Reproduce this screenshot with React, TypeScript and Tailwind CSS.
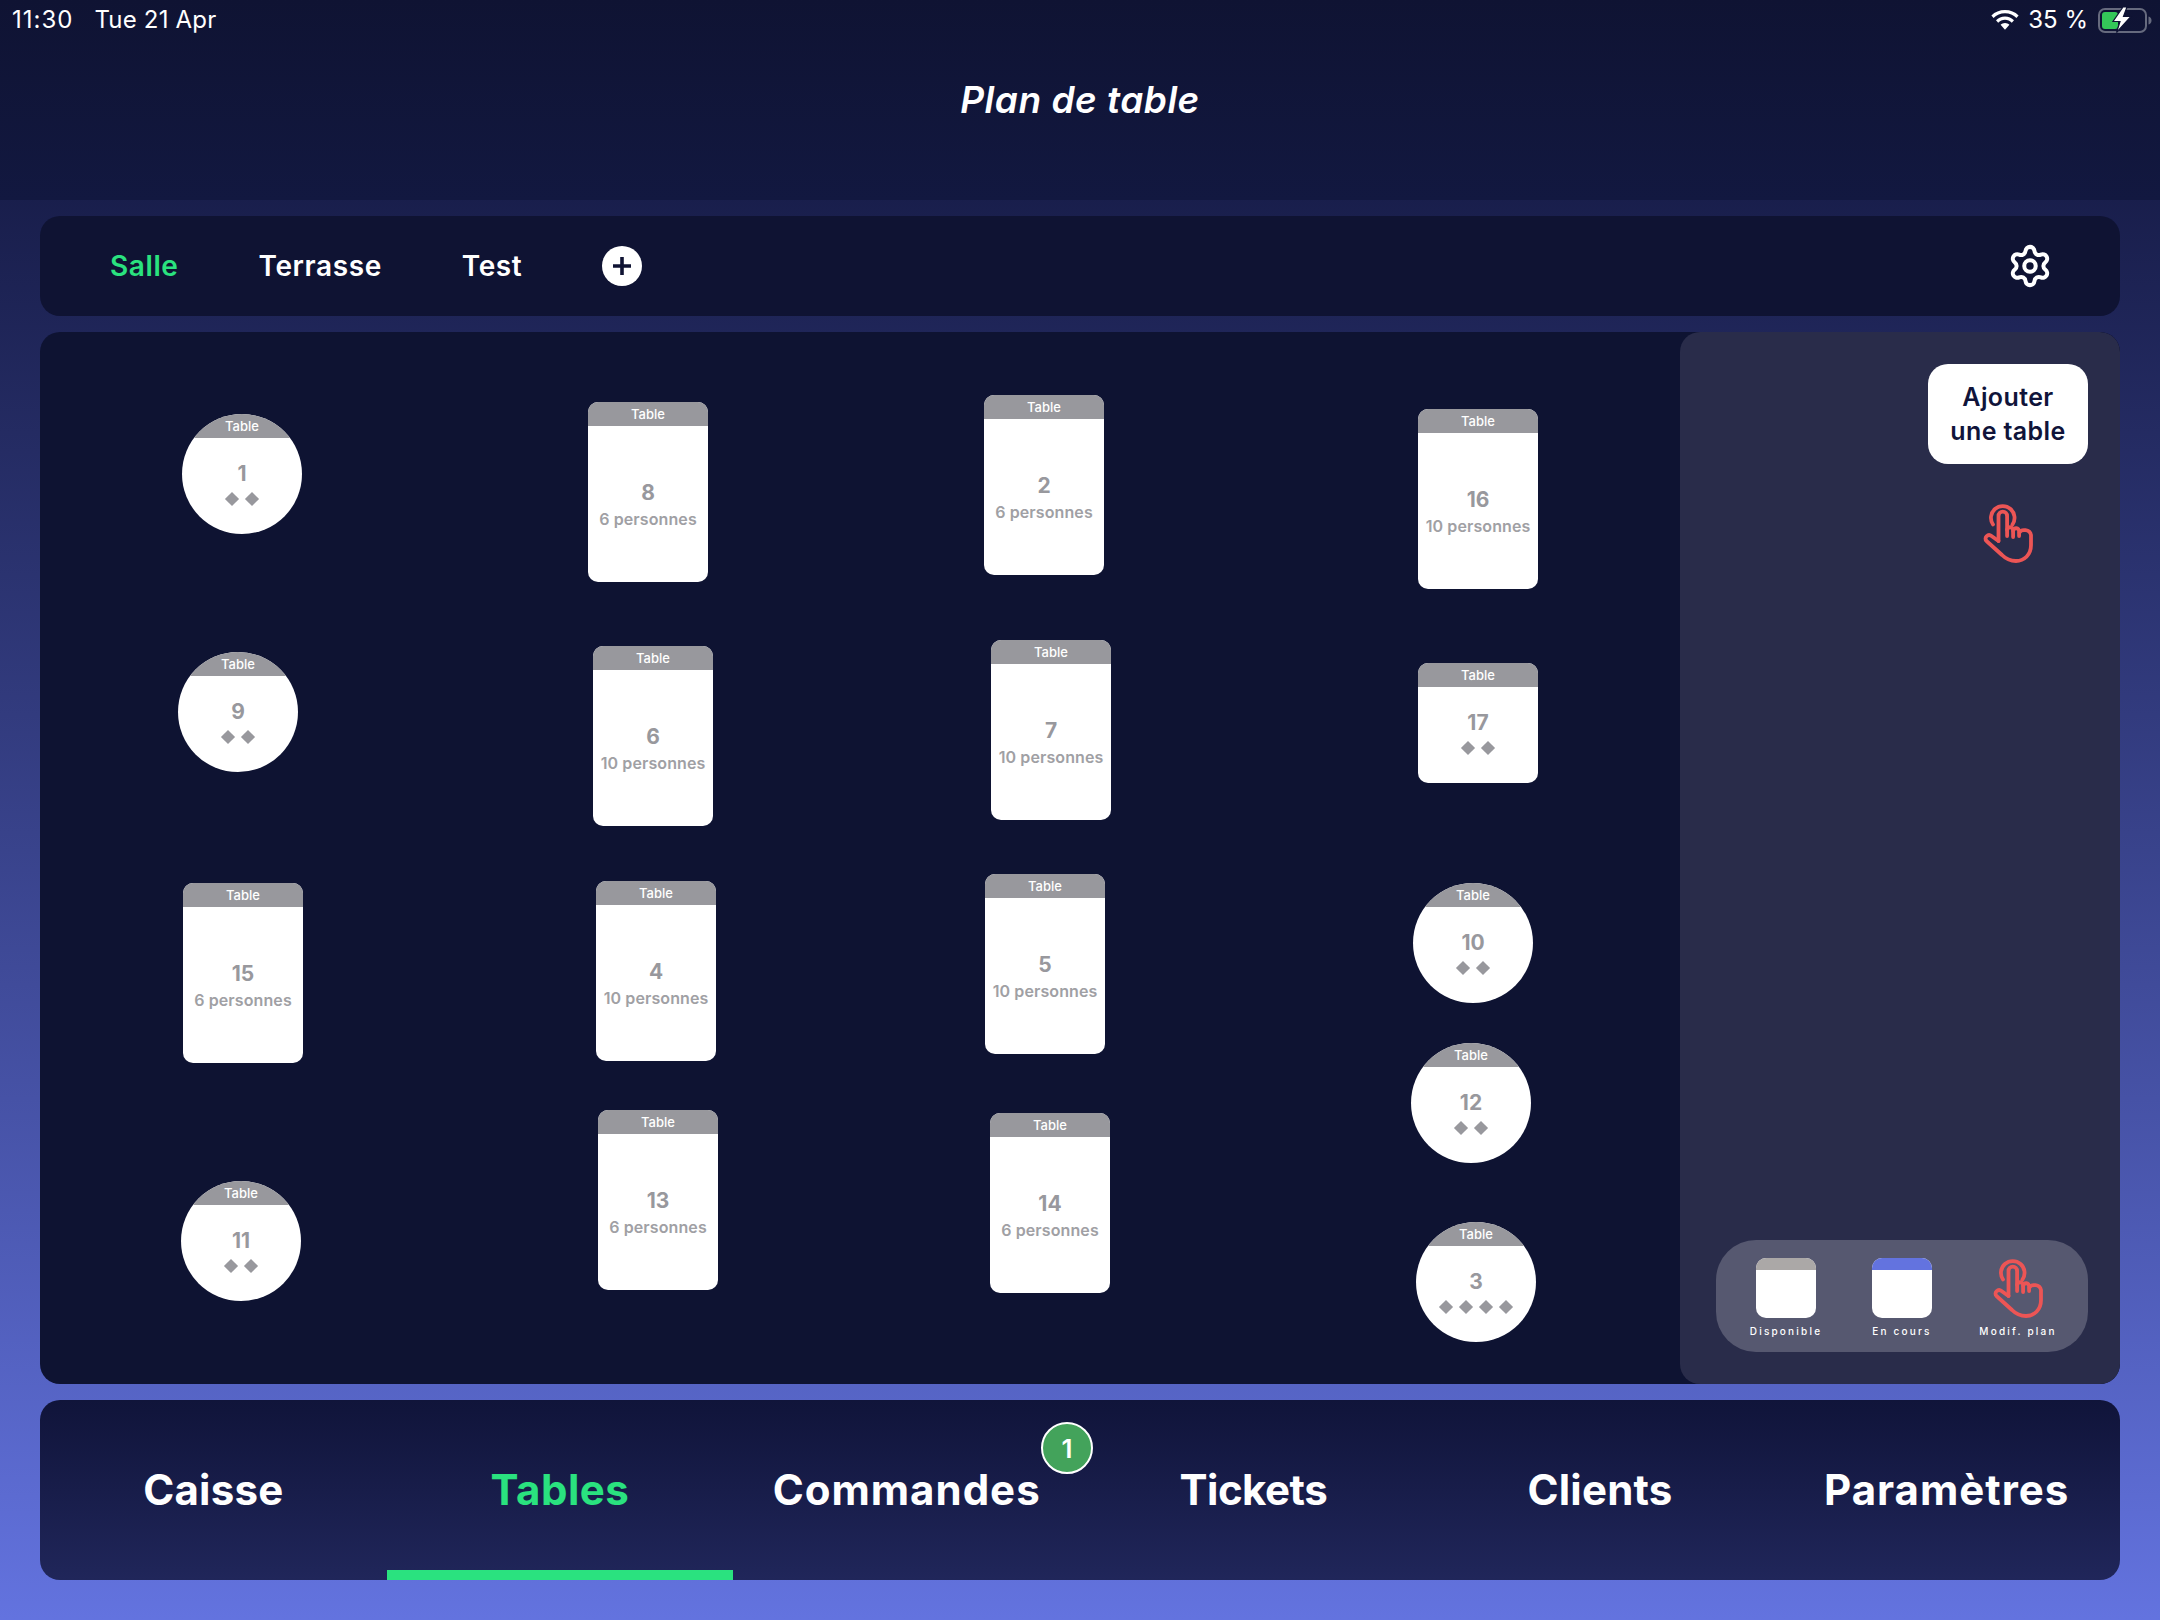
import React from 'react';
import { Settings } from 'lucide-react';

type TableItem = {
  id: number;
  x: number;
  y: number;
  shape: 'rect' | 'round' | 'square';
  seats: number;
};

// positions are relative to the floor panel (page x - 40, page y - 332)
const tables: TableItem[] = [
  { id: 1, x: 142, y: 82, shape: 'round', seats: 2 },
  { id: 8, x: 548, y: 70, shape: 'rect', seats: 6 },
  { id: 2, x: 944, y: 63, shape: 'rect', seats: 6 },
  { id: 16, x: 1378, y: 77, shape: 'rect', seats: 10 },
  { id: 9, x: 138, y: 320, shape: 'round', seats: 2 },
  { id: 6, x: 553, y: 314, shape: 'rect', seats: 10 },
  { id: 7, x: 951, y: 308, shape: 'rect', seats: 10 },
  { id: 17, x: 1378, y: 331, shape: 'square', seats: 2 },
  { id: 15, x: 143, y: 551, shape: 'rect', seats: 6 },
  { id: 4, x: 556, y: 549, shape: 'rect', seats: 10 },
  { id: 5, x: 945, y: 542, shape: 'rect', seats: 10 },
  { id: 10, x: 1373, y: 551, shape: 'round', seats: 2 },
  { id: 12, x: 1371, y: 711, shape: 'round', seats: 2 },
  { id: 11, x: 141, y: 849, shape: 'round', seats: 2 },
  { id: 13, x: 558, y: 778, shape: 'rect', seats: 6 },
  { id: 14, x: 950, y: 781, shape: 'rect', seats: 6 },
  { id: 3, x: 1376, y: 890, shape: 'round', seats: 4 },
];

const tabs = [
  { label: 'Caisse', spacing: 'tracking-[0.2px]' },
  { label: 'Tables', spacing: 'tracking-[0.5px]' },
  { label: 'Commandes', spacing: 'tracking-[1px]' },
  { label: 'Tickets', spacing: 'tracking-[-0.5px]' },
  { label: 'Clients', spacing: 'tracking-[0.2px]' },
  { label: 'Paramètres', spacing: 'tracking-[1px]' },
];

const TapIcon: React.FC<{ className?: string }> = ({ className }) => (
  <svg viewBox="0 0 50 60" className={className} fill="none" stroke="#ec5555" strokeWidth="3.8" strokeLinecap="round" strokeLinejoin="round">
    <path d="M10 21.500 A11.800 11.800 0 1 1 29.500 21.500" />
    <path d="M15.500 38 V13 a4.300 4.300 0 0 1 8.600 0 V33" />
    <path d="M24.100 27 a3 3 0 0 1 6 0.500 V34" />
    <path d="M30.100 28 a3 3 0 0 1 6 0.500 V33" />
    <path d="M36.500 29.500 C38 26 47 26 48 32 V42 C48 52 41 58 33 58 C27 58 23 56 19 52 L3.500 38 C0.500 35 5 30 8.500 33 L15.500 38" />
  </svg>
);

const Diamonds: React.FC<{ count: number }> = ({ count }) => (
  <div className="mt-[6px] flex justify-center gap-[10px]">
    {Array.from({ length: count }).map((_, i) => (
      <span key={i} className="h-[10px] w-[10px] rotate-45 bg-[#98989d]" />
    ))}
  </div>
);

const FloorTable: React.FC<{ table: TableItem }> = ({ table }) => {
  const isRect = table.shape === 'rect';
  const outer = table.shape === 'round' ? 'h-[120px] rounded-full' : isRect ? 'h-[180px] rounded-[10px]' : 'h-[120px] rounded-[10px]';
  return (
    <div className={`absolute flex w-[120px] flex-col overflow-hidden bg-white ${outer}`} style={{ left: table.x, top: table.y }}>
      <div className="flex h-[24px] shrink-0 items-center justify-center bg-[#98989d] pt-[1px] text-[13px] font-medium text-white">Table</div>
      {isRect ? (
        <div className="flex flex-1 flex-col items-center justify-center pt-[3px]">
          <span className="text-[21px] leading-[26px] font-bold text-[#98989d]">{table.id}</span>
          <span className="text-[16px] leading-[26px] font-semibold tracking-[0.1px] whitespace-nowrap text-[#a0a0a4]">{table.seats} personnes</span>
        </div>
      ) : (
        <div className="flex flex-col items-center pt-[22px]">
          <span className="text-[21px] leading-[28px] font-bold text-[#98989d]">{table.id}</span>
          <Diamonds count={table.seats} />
        </div>
      )}
    </div>
  );
};

const LegendSwatch: React.FC<{ color: string; label: string }> = ({ color, label }) => (
  <div className="flex flex-col items-center">
    <div className="flex h-[60px] w-[60px] flex-col overflow-hidden rounded-[10px] bg-white">
      <div className={`h-[12px] ${color}`} />
    </div>
    <span className="mt-[6px] text-[10px] leading-[14px] font-medium tracking-[2.2px] whitespace-nowrap text-white">{label}</span>
  </div>
);

const StatusBar: React.FC = () => (
  <div className="flex h-[40px] items-center justify-between pr-[7px] pl-[12px] text-[24px] text-white">
    <div className="flex gap-[21px]">
      <span className="tracking-[1px]">11:30</span>
      <span className="tracking-[0.2px]">Tue 21 Apr</span>
    </div>
    <div className="flex items-center">
      <svg viewBox="0 0 28 20" className="h-[20px] w-[28px]" fill="white">
        <path d="M14 0 C8.600 0 3.900 2 0.400 5.400 L2.600 7.900 C5.500 5 9.500 3.300 14 3.300 C18.500 3.300 22.500 5 25.400 7.900 L27.600 5.400 C24.100 2 19.400 0 14 0 Z" />
        <path d="M14 6.500 C10.500 6.500 7.300 7.900 5 10.200 L7.200 12.700 C9 11 11.400 9.800 14 9.800 C16.600 9.800 19 11 20.800 12.700 L23 10.200 C20.700 7.900 17.500 6.500 14 6.500 Z" />
        <path d="M14 13 C12.300 13 10.800 13.700 9.600 14.800 L14 19.800 L18.400 14.800 C17.200 13.700 15.700 13 14 13 Z" />
      </svg>
      <span className="ml-[9px]">35 %</span>
      <svg viewBox="0 0 57 28" className="ml-[8px] h-[28px] w-[57px]" fill="none">
        <rect x="3" y="3" width="47" height="23" rx="6" stroke="#666a7e" strokeWidth="2" />
        <rect x="6" y="6" width="16" height="17" rx="3" fill="#34c759" />
        <path d="M52.500 10.500 c2 0.500 3 2 3 4 s-1 3.500 -3 4 Z" fill="#666a7e" />
        <path d="M27 1 L17 15.500 H24 L20.500 26.500 L35 10.500 H27.500 L31 1 Z" fill="white" stroke="#0f1333" strokeWidth="1.2" />
      </svg>
    </div>
  </div>
);

const App: React.FC = () => {
  return (
    <div className="flex h-[1620px] w-[2160px] flex-col overflow-hidden bg-gradient-to-b from-[#10143a] to-[#6373df] font-[Inter,sans-serif]">
      <header className="flex h-[200px] shrink-0 flex-col bg-gradient-to-b from-[#0f1333] to-[#121840]">
        <StatusBar />
        <div className="flex h-[120px] items-center justify-center text-[37px] font-semibold tracking-[0.5px] text-white italic">Plan de table</div>
      </header>

      <div className="flex flex-1 flex-col gap-4 px-10 pt-4 pb-10">
        <div className="flex h-[100px] shrink-0 items-center justify-between rounded-[20px] bg-[#0f1333] pr-[67px] pl-[70px]">
          <div className="flex items-center gap-[80px] text-[28px] font-semibold tracking-[0.6px] text-white">
            <span className="text-[#2ae27f]">Salle</span>
            <span>Terrasse</span>
            <span>Test</span>
            <button className="flex h-[40px] w-[40px] items-center justify-center rounded-full bg-white">
              <svg viewBox="0 0 24 24" className="h-[24px] w-[24px]" fill="none" stroke="#0f1333" strokeWidth="3.6">
                <path d="M12 3 V21 M3 12 H21" />
              </svg>
            </button>
          </div>
          <Settings className="h-[46px] w-[46px] text-white" strokeWidth={2.1} />
        </div>

        <div className="flex h-[1052px] shrink-0 overflow-hidden rounded-[20px] bg-[#0e1332]">
          <div className="relative flex-1">
            {tables.map((t) => (
              <FloorTable key={t.id} table={t} />
            ))}
          </div>
          <aside className="flex w-[440px] shrink-0 flex-col items-end justify-between rounded-[20px] bg-[#292c4a] pt-[32px] pr-[32px] pb-[32px]">
            <div className="flex flex-col items-center">
              <button className="h-[100px] w-[160px] rounded-[20px] bg-white text-[25px] leading-[34px] font-semibold tracking-[0.4px] text-[#10143a]">
                Ajouter
                <br />
                une table
              </button>
              <TapIcon className="mt-[39px] h-[60px] w-[50px]" />
            </div>
            <div className="grid h-[112px] w-[372px] grid-cols-3 rounded-[40px] bg-[#565870] px-3 pt-[18px]">
              <LegendSwatch color="bg-[#aba8a7]" label="Disponible" />
              <LegendSwatch color="bg-[#6373df]" label="En cours" />
              <div className="flex flex-col items-center">
                <TapIcon className="h-[60px] w-[50px]" />
                <span className="mt-[6px] text-[10px] leading-[14px] font-medium tracking-[2.2px] whitespace-nowrap text-white">Modif. plan</span>
              </div>
            </div>
          </aside>
        </div>

        <nav className="relative grid h-[180px] shrink-0 grid-cols-6 overflow-hidden rounded-[20px] bg-gradient-to-b from-[#10143a] to-[#20265a]">
          {tabs.map((tab) => (
            <div key={tab.label} className={`flex items-center justify-center pb-[2px] text-[42px] font-bold ${tab.spacing} ${tab.label === 'Tables' ? 'border-b-[10px] border-[#2ae27f] pt-[10px] text-[#2ae27f]' : 'text-white'}`}>
              <span className="whitespace-nowrap">{tab.label}</span>
            </div>
          ))}
          <span className="absolute top-[22px] left-[1001px] flex h-[52px] w-[52px] items-center justify-center rounded-full border-2 border-white bg-[#43a35b] text-[26px] font-semibold text-white">1</span>
        </nav>
      </div>
    </div>
  );
};

export default App;
